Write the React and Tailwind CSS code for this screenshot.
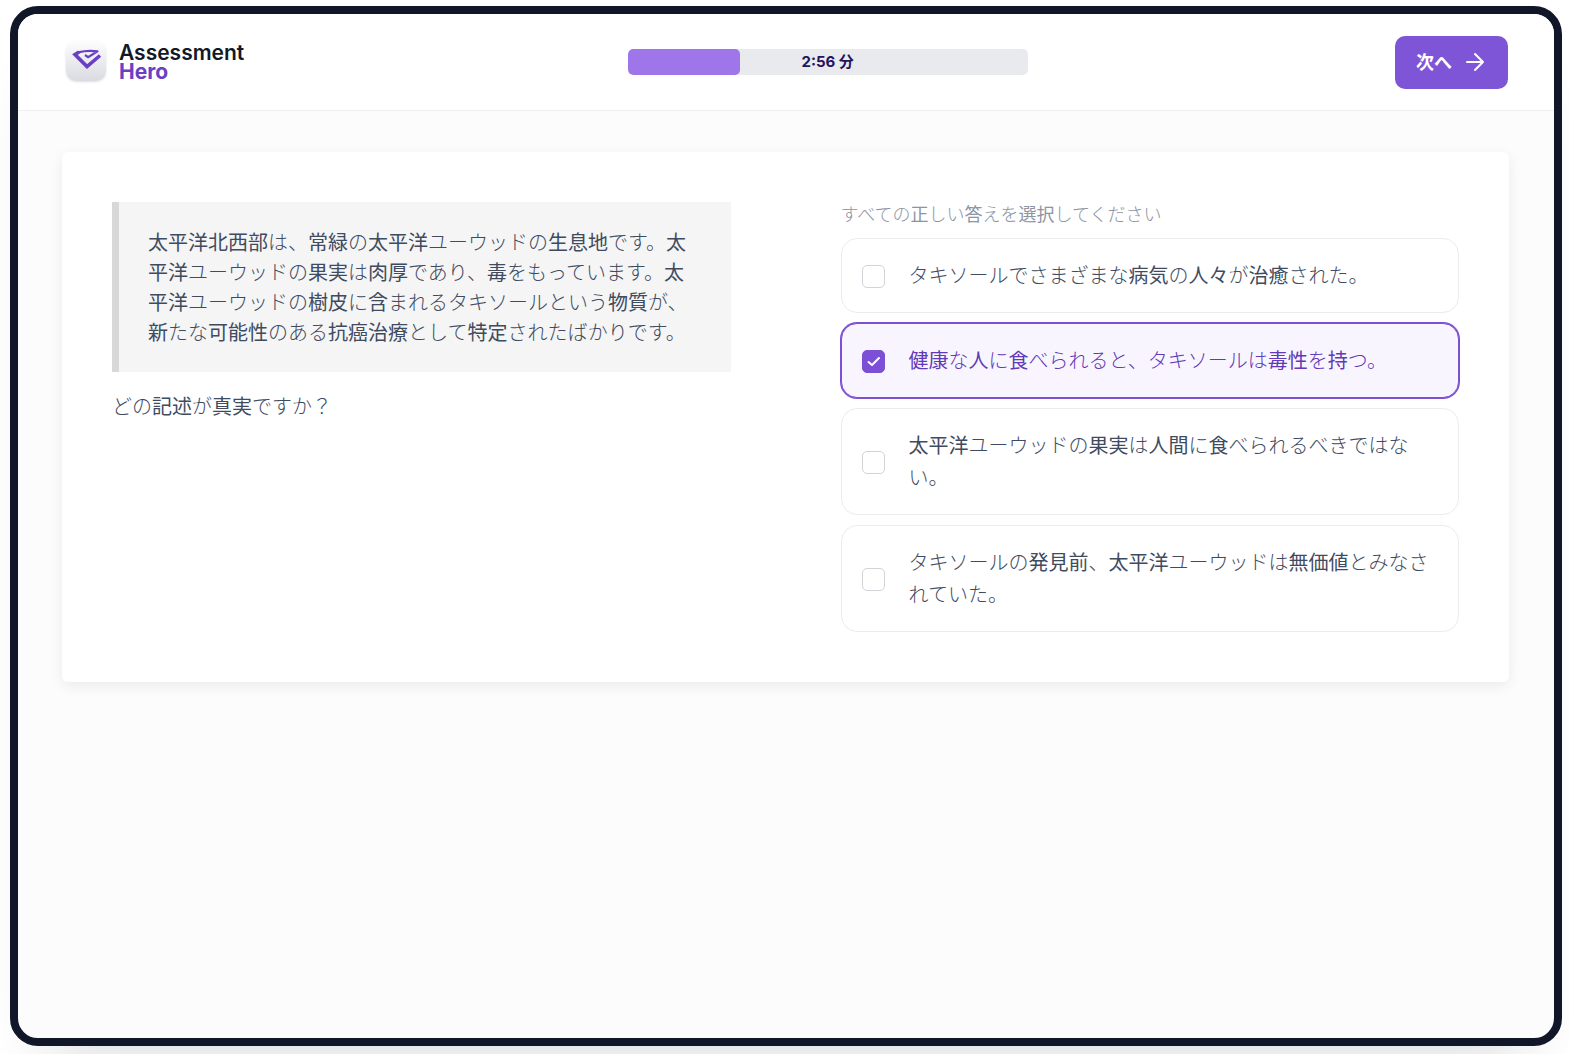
import React, { useState } from 'react';

const passage =
  '太平洋北西部は、常緑の太平洋ユーウッドの生息地です。太平洋ユーウッドの果実は肉厚であり、毒をもっています。太平洋ユーウッドの樹皮に含まれるタキソールという物質が、新たな可能性のある抗癌治療として特定されたばかりです。';

const question = 'どの記述が真実ですか？';

const options = [
  { id: 'a', text: 'タキソールでさまざまな病気の人々が治癒された。' },
  { id: 'b', text: '健康な人に食べられると、タキソールは毒性を持つ。' },
  { id: 'c', text: '太平洋ユーウッドの果実は人間に食べられるべきではない。' },
  { id: 'd', text: 'タキソールの発見前、太平洋ユーウッドは無価値とみなされていた。' },
];

// Kana is set light, kanji keeps the regular weight
const JpText = ({ children }) =>
  children.split(/([\u4e00-\u9fff々]+)/).filter(Boolean).map((part, i) => (
    <span key={i} className={/[\u4e00-\u9fff々]/.test(part) ? 'font-normal' : 'font-light'}>
      {part}
    </span>
  ));

const Logo = () => (
  <a href="#" className="flex items-end gap-[13px] pr-4 pb-0.5">
    <span className="flex size-10 items-center justify-center rounded-[10px] bg-linear-to-b from-[#fdfdfe] to-[#d9dbe1] shadow-sm">
      <svg viewBox="0 0 40 40" className="size-10" fill="none" stroke="#6b3fc4" strokeLinejoin="round">
        <path d="M34 14.5L21 25.5L9 13.5L13 11" strokeWidth="3.6" strokeLinejoin="miter" />
        <path d="M12 11.4Q22 9 31.5 10.4L22 16.2L19 14" strokeWidth="2.2" />
      </svg>
    </span>
    <span className="flex flex-col text-[21px] leading-[19px]">
      <span className="font-semibold text-[#111827]">Assessment</span>
      <span className="font-bold text-[#6b3fc4]">Hero</span>
    </span>
  </a>
);

const Timer = ({ percent, label }) => (
  <div className="relative h-[26px] w-[400px] overflow-hidden rounded-[5px] bg-[#e9eaed]">
    <div className="h-full rounded-[5px] bg-[#9f75ea]" style={{ width: `${percent}%` }} />
    <span className="absolute inset-0 flex items-center justify-center text-[15px] font-bold text-[#25135c]">
      {label}
    </span>
  </div>
);

const Option = ({ option, checked, onChange }) => (
  <label
    className={
      checked
        ? 'flex cursor-pointer items-center gap-6 rounded-2xl border border-[#7c50d0] bg-[#f8f5ff] px-5 pt-[21px] pb-5 text-[#6239b8] ring-1 ring-[#7c50d0]'
        : 'flex cursor-pointer items-center gap-6 rounded-2xl border border-[#ececee] bg-white px-5 pt-[21px] pb-5 text-[#3f4b5f]'
    }
  >
    <span className="relative flex size-[23px] shrink-0">
      <input
        type="checkbox"
        checked={checked}
        onChange={onChange}
        className="size-full appearance-none rounded-[5px] border border-[#d1d3d8] bg-white checked:border-[#7c50d6] checked:bg-[#7c50d6]"
      />
      {checked && (
        <svg viewBox="0 0 23 23" className="pointer-events-none absolute inset-0" fill="none" stroke="#fff" strokeWidth="2" strokeLinecap="round" strokeLinejoin="round">
          <path d="M6.5 12L10 15L17 8" />
        </svg>
      )}
    </span>
    <span className="flex-1 text-[20px] leading-8">
      <JpText>{option.text}</JpText>
    </span>
  </label>
);

const App = () => {
  const [selected, setSelected] = useState(['b']);

  const toggle = (id) => {
    setSelected((prev) => (prev.includes(id) ? prev.filter((x) => x !== id) : [...prev, id]));
  };

  return (
    <div className="flex min-h-screen overflow-hidden bg-white pt-1.5 pr-[7px] pb-2 pl-2.5 font-['Inter','Noto_Sans_CJK_JP',sans-serif]" lang="ja">
      <div className="flex flex-1 flex-col overflow-hidden rounded-[28px] border-8 border-[#111729] bg-[#fcfcfc] shadow-[0_40px_60px_-40px_rgba(17,24,39,0.2)]">
        <header className="flex h-[97px] items-center justify-between border-b border-[#efeff1] bg-white pr-[46px] pl-12">
          <Logo />
          <Timer percent={28} label="2:56 分" />
          <button className="flex h-[53px] items-center gap-[11px] rounded-[10px] bg-[#7f55d7] px-[21px] text-[18px] font-bold text-white">
            次へ
            <svg viewBox="0 0 24 24" className="size-6" fill="none" stroke="currentColor" strokeWidth="2" strokeLinecap="round" strokeLinejoin="round">
              <path d="M4 12H20M12 4L20 12L12 20" />
            </svg>
          </button>
        </header>

        <main className="py-[41px] pr-[45px] pl-11">
          <div className="grid grid-cols-2 gap-[110px] rounded-md bg-white p-[50px] shadow-[0_4px_14px_rgba(0,0,0,0.07)]">
            <section className="text-[20px] leading-[30px] text-[#3f4b5f]">
              <blockquote className="border-l-[7px] border-[#d8d8d9] bg-[#f5f5f5] px-[29px] pt-[26px] pb-6">
                <JpText>{passage}</JpText>
              </blockquote>
              <p className="mt-5">
                <JpText>{question}</JpText>
              </p>
            </section>

            <fieldset className="flex flex-col">
              <legend className="mb-2.5 text-[18px] leading-[26px] text-[#8d94a3]">
                <JpText>すべての正しい答えを選択してください</JpText>
              </legend>
              <div className="flex flex-col gap-2.5">
                {options.map((option) => (
                  <Option
                    key={option.id}
                    option={option}
                    checked={selected.includes(option.id)}
                    onChange={() => toggle(option.id)}
                  />
                ))}
              </div>
            </fieldset>
          </div>
        </main>
      </div>
    </div>
  );
};

export default App;
